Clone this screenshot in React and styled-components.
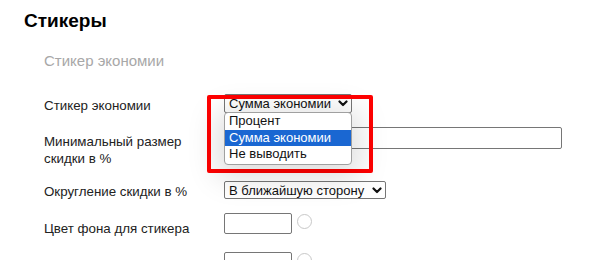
import React from 'react'
import styled, {createGlobalStyle} from 'styled-components'

const Global=createGlobalStyle`
body{
    margin:0;
    background:#fff;
    font-family:"Liberation Sans",Arial,sans-serif;
    color:#222;
}
`

function Chevron(){
    return(
        <svg width="10" height="7" viewBox="0 0 10 7">
            <path d="M1.5 1.5 L5 5 L8.5 1.5" fill="none" stroke="#111" strokeWidth="2.2" strokeLinecap="round" strokeLinejoin="round"/>
        </svg>
    )
}

function App(){
    return(
       <>
       <Global/>
       <Page>
           <Title>Стикеры</Title>
           <Section>
               <SubTitle>Стикер экономии</SubTitle>
               <Row $mt={25}>
                   <Label $pt={3}>Стикер экономии</Label>
                   <Select $w={128} $h={19}>
                       <span>Сумма экономии</span>
                       <Chevron/>
                   </Select>
               </Row>
               <Row $mt={13}>
                   <Label $pt={6}>Минимальный размер<br/>скидки в %</Label>
                   <TextInput $w={338}/>
               </Row>
               <Row $mt={14}>
                   <Label $pt={2}>Округление скидки в %</Label>
                   <Select $w={162} $h={18}>
                       <span>В ближайшую сторону</span>
                       <Chevron/>
                   </Select>
               </Row>
               <Row $mt={13}>
                   <Label $pt={7}>Цвет фона для стикера</Label>
                   <ColorField>
                       <TextInput $w={68} $h={21}/>
                       <Swatch/>
                   </ColorField>
               </Row>
               <Row $mt={15}>
                   <Label $pt={7}>Цвет текста стикера</Label>
                   <ColorField>
                       <TextInput $w={68} $h={21}/>
                       <Swatch/>
                   </ColorField>
               </Row>
           </Section>
           <Highlight/>
           <Popup>
               <Option>Процент</Option>
               <Option $active>Сумма экономии</Option>
               <Option>Не выводить</Option>
           </Popup>
       </Page>
       </>
    )
}

const Page=styled.div`
position:relative;
width:591px;
height:260px;
overflow:hidden;
padding:9px 0 0 24px;
box-sizing:border-box;
`
const Title=styled.div`
font-size:19px;
font-weight:bold;
line-height:23px;
color:#000;
`
const Section=styled.div`
padding-left:20px;
`
const SubTitle=styled.div`
margin-top:20px;
font-size:15px;
line-height:17px;
color:#a8a8a8;
`
const Row=styled.div`
display:flex;
align-items:flex-start;
margin-top:${p=>p.$mt}px;
`
const Label=styled.div`
width:180px;
flex-shrink:0;
padding-top:${p=>p.$pt}px;
font-size:13.33px;
line-height:17px;
color:#222;
`
const Select=styled.div`
width:${p=>p.$w}px;
height:${p=>p.$h}px;
box-sizing:border-box;
border:1px solid #767676;
border-radius:2px;
display:flex;
align-items:center;
justify-content:space-between;
padding:0 3px 0 4px;
font-size:13px;
color:#111;
background:#fff;
span{
    white-space:nowrap;
}
`
const TextInput=styled.div`
width:${p=>p.$w}px;
height:${p=>p.$h||22}px;
box-sizing:border-box;
border:1px solid #767676;
border-radius:2px;
background:#fff;
`
const ColorField=styled.div`
display:flex;
align-items:flex-start;
`
const Swatch=styled.div`
width:15px;
height:15px;
box-sizing:border-box;
margin:1px 0 0 5px;
border:1px solid #c8c8c8;
border-radius:50%;
`
const Highlight=styled.div`
position:absolute;
left:207px;
top:95px;
width:166px;
height:78px;
box-sizing:border-box;
border:4px solid #ff0000;
border-radius:2px;
`
const Popup=styled.div`
position:absolute;
left:224px;
top:112px;
width:128px;
box-sizing:border-box;
border:1px solid #a0a0a0;
border-radius:4px;
background:#fff;
overflow:hidden;
padding:0 0 1px 0;
box-shadow:0 6px 30px 8px rgba(0,0,0,0.13);
`
const Option=styled.div`
height:16.5px;
line-height:16px;
padding-left:4px;
font-size:13px;
white-space:nowrap;
color:${p=>p.$active?'#fff':'#111'};
background:${p=>p.$active?'#1a67d2':'transparent'};
`

export default App;
